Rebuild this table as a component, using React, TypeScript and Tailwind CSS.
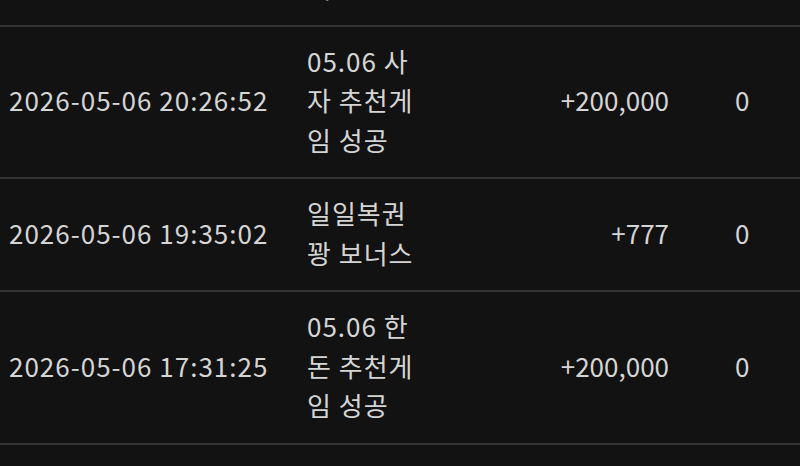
import React from "react";

type TRow = {
  date: string;
  title: string;
  amount: string;
  balance: string;
};

const rows: TRow[] = [
  { date: "2026-05-06 21:02:17", title: "05.06 호랑이 추천게임 성공", amount: "+200,000", balance: "0" },
  { date: "2026-05-06 20:26:52", title: "05.06 사자 추천게임 성공", amount: "+200,000", balance: "0" },
  { date: "2026-05-06 19:35:02", title: "일일복권 꽝 보너스", amount: "+777", balance: "0" },
  { date: "2026-05-06 17:31:25", title: "05.06 한돈 추천게임 성공", amount: "+200,000", balance: "0" },
  { date: "2026-05-06 16:10:44", title: "출석 보상", amount: "+1,000", balance: "0" },
];

const HistoryRow = ({ row }: { row: TRow }) => {
  return (
    <div className="grid grid-cols-[298px_128px_252px_1fr] items-center border-b-2 border-[#343434] pt-[14px] pb-[18px]">
      <div className="pl-[9px] whitespace-nowrap tracking-[1px]">{row.date}</div>
      <div className="pl-[9px] pr-[2px] break-all tracking-[1px]">{row.title}</div>
      <div className="text-right pr-[9px]">{row.amount}</div>
      <div className="pl-[57px]">{row.balance}</div>
    </div>
  );
};

const App = () => {
  return (
    <div
      className="h-[466px] w-[800px] overflow-hidden bg-[#121212] text-[#d5d5d5] text-[26px] leading-[39.5px]"
      style={{ fontFamily: '"Noto Sans CJK KR", "Noto Sans", sans-serif' }}
    >
      <div className="-mt-[126px]">
        {rows.map((row) => (
          <HistoryRow key={row.date} row={row} />
        ))}
      </div>
    </div>
  );
};

export default App;
